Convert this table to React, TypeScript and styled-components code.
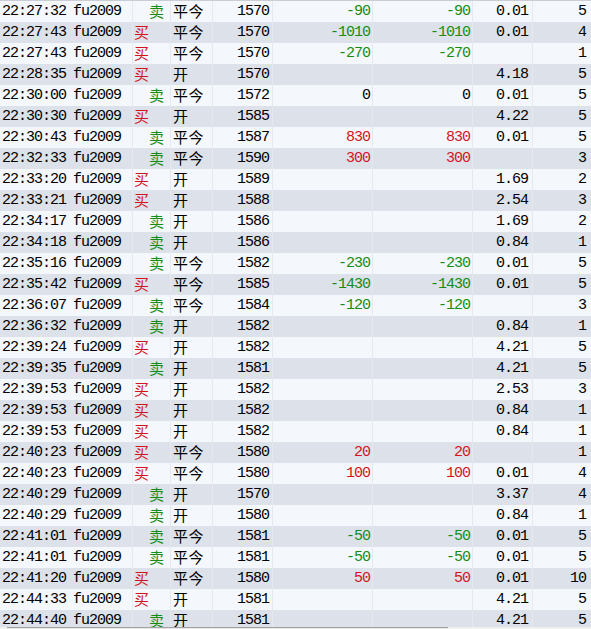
import React from "react";
import styled, { createGlobalStyle } from "styled-components";

const Global = createGlobalStyle`
  html, body { margin: 0; padding: 0; background: #ffffff; }
  body { width: 591px; height: 629px; overflow: hidden; }
`;

const Frame = styled.div`
  width: 591px;
  height: 629px;
  display: flex;
  flex-direction: column;
  overflow: hidden;
  border-top: 1px solid #c9ced6;
  box-sizing: border-box;
  background: #f4f7fc;
`;

const Table = styled.div`
  flex: 1;
  min-height: 0;
  overflow: hidden;
  display: flex;
  flex-direction: column;
`;

const Row = styled.div<{ $alt: boolean }>`
  display: grid;
  grid-template-columns: 70px 62px 38px 42px 60px 100px 100px 60px 59px;
  height: 21px;
  flex: none;
  background: ${(p) => (p.$alt ? "#dde2ea" : "#f4f7fc")};
`;

type Tone = "plain" | "buy" | "sell";

const toneColor = (t: Tone) =>
  t === "buy" ? "#d2141e" : t === "sell" ? "#168c16" : "#000000";

const Cell = styled.div<{ $align?: "left" | "right"; $pl?: number; $pr?: number; $sep?: boolean; $tone?: Tone; $cjk?: boolean }>`
  box-sizing: border-box;
  height: 21px;
  display: flex;
  align-items: center;
  justify-content: ${(p) => (p.$align === "right" ? "flex-end" : "flex-start")};
  padding-left: ${(p) => p.$pl ?? 0}px;
  padding-right: ${(p) => p.$pr ?? 0}px;
  border-left: ${(p) => (p.$sep ? "1px solid #e5e9ef" : "none")};
  color: ${(p) => toneColor(p.$tone ?? "plain")};
  white-space: nowrap;
  overflow: hidden;
  font-family: ${(p) =>
    p.$cjk
      ? '"Noto Sans CJK SC", "Noto Sans", sans-serif'
      : '"Liberation Mono", "DejaVu Sans Mono", monospace'};
  font-size: 15px;
  letter-spacing: ${(p) => (p.$cjk ? "0.5px" : "-1px")};
  line-height: ${(p) => (p.$cjk ? "17px" : "21px")};
  padding-bottom: ${(p) => (p.$cjk ? 3 : 1)}px;
`;

const Scrollbar = styled.div`
  height: 2px;
  flex: none;
  background: #f0f0f0;
  display: flex;
`;

const Thumb = styled.div`
  margin-left: 7px;
  width: 441px;
  border-top: 1px solid #a3a3a3;
  background: #e6e6e6;
`;

type Trade = {
  t: string;
  side: "买" | "卖";
  off: "平今" | "开";
  price: string;
  p1: string;
  p2: string;
  fee: string;
  qty: string;
};

const rows: Trade[] = [
  { t: "22:27:32", side: "卖", off: "平今", price: "1570", p1: "-90", p2: "-90", fee: "0.01", qty: "5" },
  { t: "22:27:43", side: "买", off: "平今", price: "1570", p1: "-1010", p2: "-1010", fee: "0.01", qty: "4" },
  { t: "22:27:43", side: "买", off: "平今", price: "1570", p1: "-270", p2: "-270", fee: "", qty: "1" },
  { t: "22:28:35", side: "买", off: "开", price: "1570", p1: "", p2: "", fee: "4.18", qty: "5" },
  { t: "22:30:00", side: "卖", off: "平今", price: "1572", p1: "0", p2: "0", fee: "0.01", qty: "5" },
  { t: "22:30:30", side: "买", off: "开", price: "1585", p1: "", p2: "", fee: "4.22", qty: "5" },
  { t: "22:30:43", side: "卖", off: "平今", price: "1587", p1: "830", p2: "830", fee: "0.01", qty: "5" },
  { t: "22:32:33", side: "卖", off: "平今", price: "1590", p1: "300", p2: "300", fee: "", qty: "3" },
  { t: "22:33:20", side: "买", off: "开", price: "1589", p1: "", p2: "", fee: "1.69", qty: "2" },
  { t: "22:33:21", side: "买", off: "开", price: "1588", p1: "", p2: "", fee: "2.54", qty: "3" },
  { t: "22:34:17", side: "卖", off: "开", price: "1586", p1: "", p2: "", fee: "1.69", qty: "2" },
  { t: "22:34:18", side: "卖", off: "开", price: "1586", p1: "", p2: "", fee: "0.84", qty: "1" },
  { t: "22:35:16", side: "卖", off: "平今", price: "1582", p1: "-230", p2: "-230", fee: "0.01", qty: "5" },
  { t: "22:35:42", side: "买", off: "平今", price: "1585", p1: "-1430", p2: "-1430", fee: "0.01", qty: "5" },
  { t: "22:36:07", side: "卖", off: "平今", price: "1584", p1: "-120", p2: "-120", fee: "", qty: "3" },
  { t: "22:36:32", side: "卖", off: "开", price: "1582", p1: "", p2: "", fee: "0.84", qty: "1" },
  { t: "22:39:24", side: "买", off: "开", price: "1582", p1: "", p2: "", fee: "4.21", qty: "5" },
  { t: "22:39:35", side: "卖", off: "开", price: "1581", p1: "", p2: "", fee: "4.21", qty: "5" },
  { t: "22:39:53", side: "买", off: "开", price: "1582", p1: "", p2: "", fee: "2.53", qty: "3" },
  { t: "22:39:53", side: "买", off: "开", price: "1582", p1: "", p2: "", fee: "0.84", qty: "1" },
  { t: "22:39:53", side: "买", off: "开", price: "1582", p1: "", p2: "", fee: "0.84", qty: "1" },
  { t: "22:40:23", side: "买", off: "平今", price: "1580", p1: "20", p2: "20", fee: "", qty: "1" },
  { t: "22:40:23", side: "买", off: "平今", price: "1580", p1: "100", p2: "100", fee: "0.01", qty: "4" },
  { t: "22:40:29", side: "卖", off: "开", price: "1570", p1: "", p2: "", fee: "3.37", qty: "4" },
  { t: "22:40:29", side: "卖", off: "开", price: "1580", p1: "", p2: "", fee: "0.84", qty: "1" },
  { t: "22:41:01", side: "卖", off: "平今", price: "1581", p1: "-50", p2: "-50", fee: "0.01", qty: "5" },
  { t: "22:41:01", side: "卖", off: "平今", price: "1581", p1: "-50", p2: "-50", fee: "0.01", qty: "5" },
  { t: "22:41:20", side: "买", off: "平今", price: "1580", p1: "50", p2: "50", fee: "0.01", qty: "10" },
  { t: "22:44:33", side: "买", off: "开", price: "1581", p1: "", p2: "", fee: "4.21", qty: "5" },
  { t: "22:44:40", side: "卖", off: "开", price: "1581", p1: "", p2: "", fee: "4.21", qty: "5" },
];

const pnlTone = (v: string): Tone => {
  if (!v) return "plain";
  const n = Number(v);
  if (n < 0) return "sell";
  if (n > 0) return "buy";
  return "plain";
};

export default function App() {
  return (
    <>
      <Global />
      <Frame>
        <Table>
          {rows.map((r, i) => (
            <Row key={i} $alt={i % 2 === 1}>
              <Cell $pl={2}>{r.t}</Cell>
              <Cell $pl={3}>fu2009</Cell>
              <Cell $sep $cjk $pl={r.side === "买" ? 1 : 16} $tone={r.side === "买" ? "buy" : "sell"}>
                {r.side}
              </Cell>
              <Cell $sep $cjk $pl={2}>{r.off}</Cell>
              <Cell $sep $align="right" $pr={3}>{r.price}</Cell>
              <Cell $sep $align="right" $pr={2} $tone={pnlTone(r.p1)}>{r.p1}</Cell>
              <Cell $sep $align="right" $pr={2} $tone={pnlTone(r.p2)}>{r.p2}</Cell>
              <Cell $sep $align="right" $pr={4}>{r.fee}</Cell>
              <Cell $sep $align="right" $pr={5}>{r.qty}</Cell>
            </Row>
          ))}
        </Table>
        <Scrollbar>
          <Thumb />
        </Scrollbar>
      </Frame>
    </>
  );
}
